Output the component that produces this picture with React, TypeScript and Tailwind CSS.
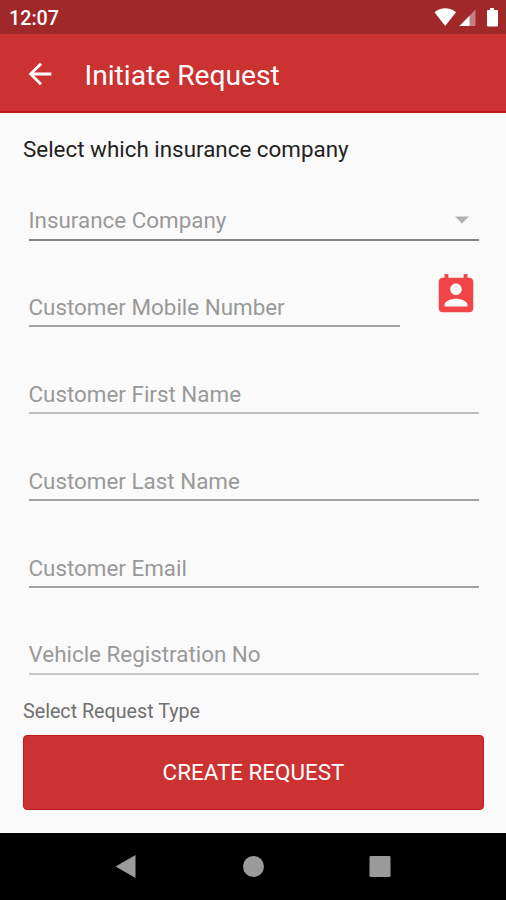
import React from "react";

interface FieldProps {
    label: string;
    className?: string;
    rowClass?: string;
    lineClass?: string;
    children?: React.ReactNode;
}

const Field: React.FC<FieldProps> = ({
    label,
    className = "h-[87px]",
    rowClass = "mb-[2px]",
    lineClass = "bg-[#a2a2a2]",
    children
}) => {
    return (
        <div className={`flex flex-col justify-end ${className}`}>
            <div className={`flex items-center justify-between h-8 ${rowClass}`}>
                <span className="text-[22.4px] leading-8 whitespace-nowrap text-[#999999]">
                    {label}
                </span>
                {children}
            </div>
            <div className={`h-[2px] ${lineClass}`} />
        </div>
    )
}

const StatusBar: React.FC = () => {
    return (
        <div className="flex items-center justify-between h-[34px] pl-[9px] pr-[7px] bg-[#a12829] text-white">
            <span className="pt-[3px] text-[19.7px] leading-8 font-medium">12:07</span>
            <svg width="65" height="34" viewBox="434 0 65 34" fill="currentColor">
                <path d="M434.5 12.3C440.8 6.9 449.7 6.9 456 12.3L445.2 26Z" />
                <path d="M475.5 9.5V26H459.5Z" opacity="0.4" />
                <path d="M469.5 15.7V26H459.5Z" />
                <path d="M490 8h4v2h3q1 0 1 1v14.500q0 1-1 1h-9q-1 0-1-1V11q0-1 1-1h2z" />
            </svg>
        </div>
    )
}

const App: React.FC = () => {
    return (
        <div className="flex flex-col w-[506px] h-[900px] bg-[#fafafa] font-['Roboto',sans-serif] overflow-hidden">
            <StatusBar />
            <header className="flex items-center h-[79px] pl-[23px] bg-[#cc3232] text-white border-b-2 border-[#c01a1c]">
                <svg width="34" height="34" viewBox="0 0 24 24" fill="currentColor" className="mt-[2px]">
                    <path d="M20 11H7.830l5.590-5.590L12 4l-8 8 8 8 1.410-1.410L7.830 13H20v-2z" />
                </svg>
                <h1 className="ml-[27.5px] pt-[6px] text-[28.2px] leading-8 whitespace-nowrap">Initiate Request</h1>
            </header>

            <main className="flex-1 px-[23px] pt-5">
                <p className="text-[22.4px] leading-8 text-[#222222] whitespace-nowrap">
                    Select which insurance company
                </p>
                <div className="pl-[5.5px] pr-[4.5px]">
                    <Field label="Insurance Company" className="h-[76px]" rowClass="mb-[3px]" lineClass="bg-[#858585]">
                        <svg width="14" height="8" viewBox="0 0 14 8" className="mr-[10px]" fill="#b2b2b2">
                            <path d="M0 0.500h14L7 7.500z" />
                        </svg>
                    </Field>
                    <div className="flex justify-between">
                        <Field label="Customer Mobile Number" className="w-[371px] h-[86px]" />
                        <svg width="46" height="46" viewBox="0 0 24 24" fill="#f04648" className="mt-[31px]">
                            <path d="M19 3h-1V1h-2v2H8V1H6v2H5c-1.110 0-2 .9-2 2v14c0 1.100.89 2 2 2h14c1.100 0 2-.9 2-2V5c0-1.100-.9-2-2-2zm-7 3c1.660 0 3 1.340 3 3s-1.340 3-3 3-3-1.340-3-3 1.340-3 3-3zm6 12H6v-1c0-2 4-3.100 6-3.100s6 1.100 6 3.100v1z" />
                        </svg>
                    </div>
                    <Field label="Customer First Name" lineClass="bg-[#bdbdbd]" />
                    <Field label="Customer Last Name" />
                    <Field label="Customer Email" />
                    <Field label="Vehicle Registration No" rowClass="mb-[3px]" lineClass="bg-[#c6c6c6]" />
                </div>
                <p className="mt-[21px] text-[19.7px] leading-8 text-[#707070] whitespace-nowrap">Select Request Type</p>
                <button className="block w-[461px] h-[75px] mt-[7px] pb-[2px] rounded-[4px] border border-[#c01a1c] bg-[#cc3232] text-white text-[22.4px] leading-8">
                    CREATE REQUEST
                </button>
            </main>

            <nav className="flex items-center h-[67px] bg-black">
                <svg width="506" height="67" viewBox="0 0 506 67" fill="#9b9b9b">
                    <path d="M135.500 22v23L115.500 33.500z" />
                    <circle cx="253.500" cy="33.500" r="10.500" />
                    <rect x="369.500" y="23" width="21" height="21" rx="1" />
                </svg>
            </nav>
        </div>
    )
}

export default App
